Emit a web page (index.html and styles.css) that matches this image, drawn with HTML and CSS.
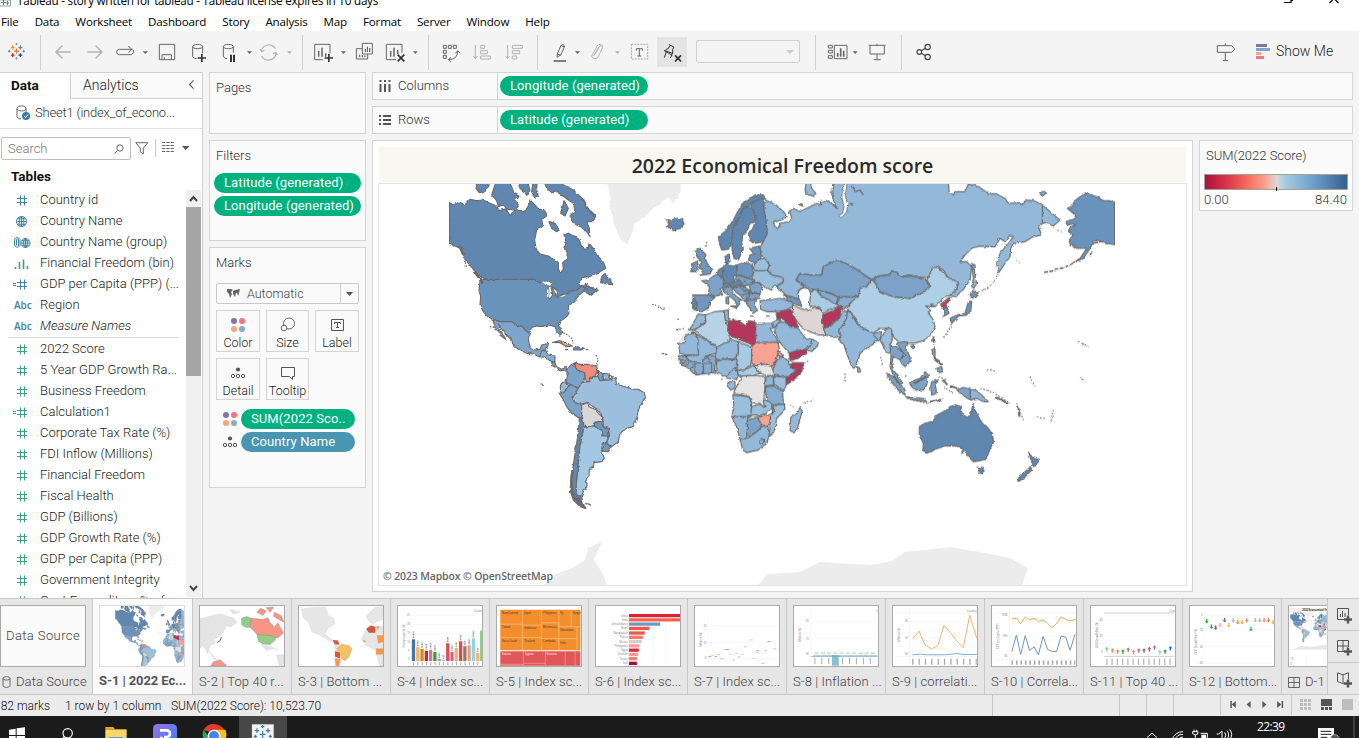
FILE: index.html
```html
<!DOCTYPE html>
<html lang="en">
<head>
<meta charset="utf-8">
<title>Tableau - story written for tableau</title>
<link rel="stylesheet" href="styles.css">
</head>
<body>
<svg class="defs" width="0" height="0">
  <defs>
    <symbol id="hash" viewBox="0 0 40 21"><path d="M17 8.5h10M17 12.5h10M20.5 5.5v10M24.5 5.5v10"/></symbol>
    <symbol id="calc" viewBox="0 0 40 21"><path d="M13 9.5h3M13 11.5h3M17 8.5h10M17 12.5h10M20.5 5.5v10M24.5 5.5v10"/></symbol>
    <symbol id="globe" viewBox="0 0 40 21"><circle cx="21.500" cy="10.500" r="5"/><ellipse cx="21.500" cy="10.500" rx="2.300" ry="5"/><path d="M16.500 10.500h10M21.500 5.500v10M17.500 7.800h8M17.500 13.200h8"/></symbol>
    <symbol id="group" viewBox="0 0 40 21"><circle cx="25.500" cy="11" r="4.500"/><ellipse cx="25.500" cy="11" rx="2" ry="4.500"/><path d="M21 11h9M25.500 6.500v9M22 8.700h7M22 13.300h7"/><path d="M14.500 13.500V7.500a3 3 0 0 1 5.500 0v7M14.500 13a2.800 2.800 0 0 0 5 1M16.500 13.500V8a1 1 0 0 1 2 0V14"/></symbol>
    <symbol id="bin" viewBox="0 0 40 21"><path d="M15.500 14v2M19.500 9v7M23.500 6.500V16M27.500 13v3" stroke-width="1.600"/></symbol>
    <symbol id="tablogo" viewBox="24 130 52 52"><g stroke-width="4" fill="none"><path d="M42 155h16M50 147v16" stroke="#e8762d"/><path d="M33 144h11M38.500 138v12" stroke="#eb912b"/><path d="M56 144h12M62 138v12" stroke="#5b879b"/><path d="M33 167h11M38.500 161v12" stroke="#c72035"/><path d="M56 167h12M62 161v12" stroke="#1f447e"/></g><g stroke-width="2.500" fill="none"><path d="M46 133h8M50 129v8M46 177h8M50 173v8" stroke="#7199a6"/><path d="M24 155h8M28 151v8M68 155h8M72 151v8" stroke="#5c6692"/></g></symbol>
    <g id="dots4"><circle cx="5" cy="5" r="3" fill="#8074a8"/><circle cx="13" cy="5" r="3" fill="#fb7180"/><circle cx="5" cy="13" r="3" fill="#f4a582"/><circle cx="13" cy="13" r="3" fill="#86aad0"/></g>
    <g id="detaildots"><circle cx="9" cy="5.500" r="2.100" fill="#555"/><g fill="none" stroke="#555"><circle cx="4" cy="12" r="1.700"/><circle cx="9" cy="12" r="1.700"/><circle cx="14" cy="12" r="1.700"/></g></g>
    <filter id="coast" filterUnits="userSpaceOnUse" x="440" y="170" width="760" height="430"><feTurbulence type="fractalNoise" baseFrequency="0.22" numOctaves="2" seed="4"/><feDisplacementMap in="SourceGraphic" scale="3" xChannelSelector="R" yChannelSelector="G"/></filter>
    <g id="world">
      <g transform="translate(440 180) scale(.33333)" stroke="#6b6b6b" stroke-width="3.400" stroke-linejoin="round">
        <path fill="#ececec" stroke="none" d="M498 0L512 45 508 70 515 105 525 140 540 175 562 195 575 160 585 130 610 115 640 85 665 70 685 50 700 70 722 35V0Z"/>
        <g fill="#6187b0">
          <path d="M27 67L40 75 58 66 75 75 90 58 110 62 130 60 150 70 170 78 178 92 200 86 210 108 225 84 235 92 250 92 262 85 270 60 285 75 296 88 310 88 318 98 320 108 305 118 308 135 290 150 284 180 288 205 300 222 325 228 340 238 355 245 355 268 362 278 370 268 368 248 380 238 382 218 372 205 378 185 372 165 385 160 395 165 410 170 420 185 425 200 435 208 445 205 447 190 460 205 470 225 485 240 492 250 497 265 480 275 465 285 445 290 430 292 418 305 418 315 430 318 440 312 445 318 435 325 425 318 412 330 395 332 380 338 365 345 350 355 345 345 352 330 335 322 325 318 310 312 285 300 130 298 122 290 112 282 100 268 85 250 70 230 60 205 45 198 35 192 27 190Z"/>
          <path d="M112 0L108 25 118 38 130 35 140 28 148 15 150 0ZM170 0L160 30 155 45 170 62 175 80 190 75 205 88 225 90 235 75 225 60 240 50 222 40 215 20 205 0ZM232 0L240 25 252 35 262 48 270 30 262 0ZM280 0L275 35 285 55 295 50 290 30 292 0Z"/>
          <path d="M310 0L320 25 338 40 345 32 365 45 385 60 400 70 405 90 390 108 400 130 425 142 440 155 450 170 448 145 440 125 460 125 467 108 455 95 440 85 432 60 415 45 400 30 365 12 360 0ZM327 125L345 130 358 150 350 155 335 145ZM372 62L385 85 375 108 362 100 368 80Z"/>
          <path d="M485 290L495 280 500 292 512 298 515 314 500 312 482 308ZM430 330L447 322 472 325 475 330 450 345 440 338Z"/>
        </g>
        <path fill="#6b93bb" d="M120 303L130 298 280 298 310 312 325 318 322 350 330 357 338 345 335 325 352 330 345 345 350 355 365 345 395 332 412 330 425 318 435 325 430 335 415 345 408 358 395 370 385 380 387 400 380 410 360 425 355 435 365 455 362 467 352 460 345 440 325 435 305 440 290 438 275 442 268 460 255 450 245 438 230 440 215 425 180 425 160 418 145 412 130 395 120 375 122 350 117 330Z"/>
        <path fill="#fff" d="M303 309L320 303 340 312 330 318 312 315ZM320 332L327 326 327 352 320 354ZM338 324L350 332 355 345 346 340ZM350 354L368 345 385 342 372 350Z" stroke-width="2"/>
        <path fill="#7fa6ca" d="M160 420L180 425 215 425 230 440 245 438 255 450 268 460 265 480 270 500 280 510 300 508 305 495 325 490 322 505 312 510 305 525 298 530 280 522 260 520 235 508 220 495 215 480 200 465 190 450 175 432 182 455 200 480 180 465 175 450 162 440Z"/>
        <path fill="#86acd0" d="M298 530L305 512 318 512 322 524 345 528 345 545 332 545 318 532ZM332 545L345 548 350 560 365 568 378 562 380 570 360 572 345 562Z"/>
        <path fill="#ef9a8d" d="M340 487L360 482 380 490 397 498 380 500 360 488Z"/>
        <path fill="#6a90b8" d="M400 505L412 500 430 505 425 510 405 510ZM374 509h10M437 509h8"/>
        <path fill="none" stroke-dasharray="5 4" d="M370 458L385 466 395 475 400 490M468 525L475 540 468 555M636 373L655 378 670 390M668 520L682 524M712 418L720 416M710 448L720 448M302 610L310 617 302 616M150 440L162 443M60 205L75 240 80 265"/>
        <path fill="#7ba2c8" d="M380 570L392 555 410 546 405 560 415 572 434 576 436 592 430 605 425 612 420 628 415 625 388 612 378 605 382 590Z"/>
        <path fill="#f28b7c" d="M408 555L412 550 420 553 440 553 455 555 470 558 473 572 465 588 450 592 448 605 440 606 436 595 434 578 412 570 406 562Z"/>
        <path fill="#7ba2c8" d="M473 570L490 582 485 595 495 602 480 602 472 590ZM388 612L415 625 405 640 398 655 405 668 422 672 425 690 425 708 418 714 395 700 380 680 368 655 358 640 370 638 380 628Z"/>
        <path fill="#93bcdc" d="M487 580L508 582 505 597 492 598ZM366 607L388 612 380 628 370 638 360 632 362 615Z"/>
        <path fill="#ddd" d="M508 583L520 590 512 600 507 596Z"/>
        <path fill="#9bbfdc" d="M415 625L425 608 436 606 450 605 448 594 465 590 474 590 480 602 505 600 515 602 525 592 530 610 545 617 575 627 595 628 612 638 617 652 605 670 595 690 590 715 580 740 560 745 540 760 535 785 515 800 505 795 500 786 508 768 505 745 490 740 488 712 475 690 460 680 442 668 425 672 405 668 398 655 405 640Z"/>
        <path fill="#d8d6d6" d="M425 675L442 668 447 680 470 690 475 700 488 712 488 722 465 728 460 738 432 740 425 708Z"/>
        <path fill="#7096bd" d="M465 726L482 724 490 740 505 748 507 768 485 768 488 752 462 738ZM487 790L500 788 513 803 505 815 487 814Z"/>
        <path fill="#a3c8e3" d="M432 742L460 738 488 752 485 768 507 768 500 785 487 790 485 815 493 835 485 845 462 848 460 862 448 865 447 890 436 905 442 915 432 930 425 948 410 946 408 920 412 880 416 840 420 800 426 770Z"/>
        <path fill="#6187b0" d="M418 714L428 712 432 740 425 770 418 800 415 840 412 880 408 920 410 945 425 950 430 975 438 985 420 980 400 960 390 930 395 890 402 840 410 790 415 750Z"/>
        <path fill="none" stroke-width="8" d="M398 870L394 900 396 930 402 952 420 972 436 984M412 952L425 970M60 200L72 225M105 275L125 305"/>
        <path fill="none" stroke-width="4" d="M436 970L456 976M425 55L460 110M440 318L470 330M128 302V312"/>
      </g>
      <g transform="translate(660 180) scale(.33333)" stroke="#6b6b6b" stroke-width="3.400" stroke-linejoin="round">
        <g fill="#6187b0">
          <path d="M15 118L30 125 50 115 68 118 72 132 60 145 40 152 22 140 28 130Z"/>
          <path d="M98 250L112 243 115 260 110 275 92 275ZM120 205L138 225 133 235 145 255 155 270 150 282 122 286 130 275 118 265 125 245 112 232 108 212Z" fill="#7096bd"/>
          <path d="M175 170L200 150 220 120 235 90 255 65 285 45 310 45 318 58 290 60 270 75 250 85 240 110 232 120 218 145 216 190 205 208 185 210 178 190Z"/>
          <path d="M216 190L218 145 240 110 250 85 265 80 282 90 285 115 288 125 270 130 262 150 248 165 245 190 250 205 235 240 222 235 216 210Z"/>
          <path d="M270 75L290 60 308 58 312 90 318 120 322 160 310 185 285 190 268 180 265 160 288 130 285 110 278 85ZM195 230L208 222 210 245 198 250Z"/>
          <path fill="#6b93bb" d="M268 205L300 198 303 215 303 235 285 250 265 240 270 225 282 222Z"/>
        </g>
        <path fill="#93b8d8" d="M312 70L320 62 345 72 375 100 378 112 350 125 345 122 340 130 350 145 360 140 358 130 385 125 395 112 388 95 400 85 420 95 440 85 470 70 485 75 480 65 500 62 515 70 530 85 520 60 515 40 520 0L865 0 867 35 880 45 885 35 915 35 925 12 955 20 985 40 1010 42 1035 55 1045 70 1080 68 1085 75 1095 60 1120 62 1145 72 1170 95 1200 120 1180 138 1155 128 1148 130 1135 140 1145 165 1120 170 1095 185 1060 190 1052 205 1050 230 1035 250 1015 280 1010 250 1020 220 1045 190 1060 170 1050 165 1035 185 1020 175 1005 200 985 200 960 198 935 205 915 225 900 245 920 245 935 260 930 300 905 335 885 350 870 348 880 330 892 320 895 308 868 300 850 270 830 260 818 275 815 290 795 292 770 292 750 285 725 288 710 278 695 272 690 285 655 288 635 298 620 290 575 258 545 245 530 240 515 250 490 260 485 285 450 285 420 280 408 300 425 315 432 320 418 330 412 345 418 358 400 352 378 345 350 320 370 305 368 292 335 285 322 272 328 255 315 235 303 225 300 200 310 185 322 160 318 120 312 90Z"/>
        <path fill="#fff" d="M535 108L548 100 552 80 545 50 552 0 562 0 556 50 563 70 560 95 546 112Z" stroke-width="2.500"/>
        <path fill="none" d="M568 70L580 72M575 12L585 35 600 30 610 45M1147 75V130"/>
        <path fill="#93b8d8" d="M440 0L435 30 445 45 458 48 468 40 455 25 450 0ZM415 75L425 70 428 78ZM1140 42L1152 34 1160 40 1148 46ZM935 250L942 255 945 290 950 310 942 325 935 320 940 295Z"/>
        <path fill="#9bc0dd" d="M285 250L298 238 315 235 328 255 322 272 285 272 280 262ZM275 290L285 272 322 272 335 285 368 292 370 305 350 318 340 320 335 330 320 325 310 318 298 308 280 306Z"/>
        <path fill="#7096bd" d="M230 255L250 248 278 252 280 285 265 295 232 282ZM98 345L150 345 165 352 150 365 145 385 125 395 108 390 112 365 100 360Z"/>
        <path fill="#6187b0" d="M188 265L200 250 215 258 230 258 232 285 220 290 225 305 195 310 188 290ZM175 270L188 262 188 290 172 280ZM190 312L225 305 240 300 248 308 240 318 210 320 195 322ZM98 360L110 362 108 390 98 388Z"/>
        <path fill="#7ba2c8" d="M125 302L145 300 160 288 172 282 190 295 190 320 180 328 188 345 165 348 145 345 148 320ZM188 325L210 318 218 325 215 335 230 350 245 360 235 362 240 372 232 378 225 362 205 345 190 335ZM232 285L265 295 285 300 270 315 248 318 240 300 225 298ZM268 315L285 306 300 310 308 328 300 340 272 335ZM265 338L300 342 300 355 270 358ZM218 322L248 318 268 330 268 355 255 365 240 345 225 335ZM258 365L275 358 290 360 285 375 292 392 278 400 270 385ZM198 352L206 350 206 372 198 370ZM215 378L232 378 230 386Z"/>
        <path fill="none" d="M240 320L255 335 268 330M255 318L258 330M245 345L265 340M262 352L258 365M250 300L262 312M205 308L215 318M270 408H285M318 408H328"/>
        <path fill="#93b8d9" d="M300 362L340 358 360 355 385 362 400 368 398 380 375 392 345 395 320 395 302 388Z"/>
        <path fill="#7096bd" d="M370 345L395 352 420 362 425 380 405 372 385 360Z"/>
        <path fill="#7ba2c8" d="M408 300L420 280 450 285 485 285 490 260 530 240 575 258 620 290 632 298 620 320 600 325 595 350 560 350 530 350 515 342 490 335 460 328 455 345 445 325 435 318Z"/>
        <path fill="#a9cce3" d="M452 338L462 328 490 335 515 342 535 352 525 370 545 378 520 385 490 397 478 384 455 382 448 375Z"/>
        <path fill="#86acd0" d="M470 330L490 335 515 342 535 352 528 372 505 360 480 345ZM540 352L595 350 575 365 560 378 550 390 540 378 530 372Z"/>
        <path fill="#b5355b" d="M488 402L510 395 530 385 545 380 540 410 520 425 508 440 490 442 484 425ZM348 400L365 392 398 388 405 415 414 440 395 442 372 422 360 415 352 420Z"/>
        <path fill="#ded6d5" d="M397 375L420 385 445 392 462 382 480 388 490 400 484 425 498 465 475 465 450 455 435 450 420 435 405 415 398 395Z"/>
        <path fill="#93b8d9" d="M490 445L510 440 540 410 550 392 562 395 560 415 545 440 535 455 545 470 525 472 498 465ZM345 440L360 425 378 428 395 442 415 445 425 460 440 478 455 475 475 490 470 500 455 515 440 510 405 515 388 520 370 500 355 480 345 455ZM338 425L350 418 362 420 348 440 340 442ZM562 392L575 400 590 430 600 440 635 455 645 460 665 455 660 480 645 485 640 492 620 505 600 520 592 550 582 565 575 560 560 520 550 490 535 478 545 470 535 455 545 440 560 415ZM592 560L600 565 602 575 593 578Z"/>
        <path fill="none" d="M455 475L452 495 440 508M600 435L620 452 645 455M640 465L655 480"/>
        <path fill="#b5355b" d="M388 518L410 512 438 507 440 520 415 535 390 542Z"/>
        <path fill="#aecfe5" d="M635 298L650 315 660 335 700 350 750 355 790 335 812 318 800 300 818 262 835 262 860 290 895 308 890 328 870 345 850 355 825 380 810 370 820 380 800 378 812 392 805 398 820 420 825 440 812 465 790 482 765 488 750 490 735 485 720 490 700 470 690 445 660 445 640 460 610 445 590 425 575 400 560 385 575 365 595 350 600 325 620 320Z"/>
        <path fill="#7ba2c8" d="M640 298L655 288 690 285 695 272 710 278 725 290 750 288 795 295 800 305 812 318 790 335 750 355 700 350 660 335Z"/>
        <path fill="#c43a5e" d="M842 372L868 352 870 362 858 372 860 382 845 384Z"/>
        <path fill="#6b93bb" d="M850 385L862 382 867 400 852 408ZM930 345L940 330 957 340 940 355ZM870 415L890 405 915 400 922 375 928 360 935 365 932 395 920 405 895 408 875 430Z"/>
        <path fill="#9bc0dd" d="M660 480L680 445 695 450 697 480 690 495 695 515 685 520 675 515 668 495Z"/>
        <path fill="#7ba2c8" d="M690 500L710 500 730 520 722 540 700 530 695 550 700 570 715 590 728 610 720 612 700 585 690 560 693 530ZM710 490L735 485 745 490 735 505 750 530 750 545 735 560 725 550 720 540 735 525ZM678 580L700 590 720 615 735 630 735 645 720 635 700 610ZM735 650L760 652 790 655 800 665 760 660ZM752 605L780 595 795 575 805 585 800 615 790 630 765 630 755 620ZM815 605L835 600 825 610 830 640 815 645 812 620ZM890 630L910 622 931 628 931 660 915 650 905 642ZM815 510L825 505 825 530 830 545 820 535ZM830 565L845 560 848 575 838 578ZM814 482L822 470 820 484ZM752 496L762 494 758 506Z"/>
        <path fill="#8fb6d8" d="M931 628L950 632 965 645 985 665 970 665 950 655 931 660Z"/>
        <path fill="none" stroke-width="6" d="M828 540L845 555M760 612L800 590M870 618L895 625M810 665L845 660M1008 652L1045 670M1075 680L1078 710M822 535L840 545M850 600L862 615"/>
        <path fill="none" stroke-dasharray="5 5" d="M955 338C985 325 1000 310 1015 285M662 530L668 560M680 590L720 640M740 655L800 670 850 655M850 620L880 640M960 625L995 635 1050 670M1070 670L1090 720M1130 712L1155 715M1180 690L1172 730M1110 590L1125 620M1255 485L1288 500M825 480L822 510M875 435L850 475M980 570L1010 574M1260 590L1275 605M735 590L750 600M835 590L860 600M1192 150L1208 156M1068 240L1080 248M100 235L112 225M135 200L142 185M48 450L75 445M5 520L22 525M185 600L190 580M390 675L400 682M430 668L460 660M440 545L450 542M555 580L556 610M10 385L14 388"/>
        <g fill="#6187b0" transform="translate(600 0)">
          <path d="M178 740L190 732 220 722 230 705 245 698 258 692 270 680 285 675 305 680 300 695 315 705 330 710 335 690 338 673 345 690 355 710 362 722 385 745 398 765 400 785 385 820 378 838 355 843 340 845 325 830 318 815 305 820 310 808 300 800 280 798 255 798 225 808 200 820 188 815 190 790 178 765ZM352 862L370 862 368 878 358 880ZM505 817L520 835 538 838 530 855 520 860 515 845ZM512 860L515 870 490 895 475 905 472 898 490 880Z"/>
          <path fill="#6b93bb" d="M770 67L770 195 742 190 728 185 712 180 700 185 690 205 670 235 640 248 660 235 680 205 650 205 630 190 628 180 640 165 625 155 632 142 650 130 620 135 615 125 640 118 650 110 640 100 622 85 640 75 640 65 660 50 680 40 710 50 730 62 745 62Z"/>
          <path fill="none" stroke-width="5" stroke-dasharray="12 4" d="M552 277C590 272 620 262 645 245M700 190L728 183M690 225L698 212"/>
        </g>
        <g fill="#93b8d9">
          <path fill="#b8d3e6" d="M102 450L135 430 135 405 165 395 192 392 198 430 205 440 205 465 213 480 170 502Z"/>
          <path d="M88 450L105 420 115 402 135 405 138 425 102 450ZM192 392L205 390 205 415 210 420 198 430Z"/>
          <path fill="#e6e6e6" stroke="none" d="M55 490L75 455 98 455 95 465 75 470 72 488Z"/>
          <path fill="#b5355b" d="M205 425L220 420 240 425 258 438 262 422 285 425 287 499 215 470 203 460Z"/>
          <path d="M287 430L335 430 340 445 330 445 355 487 288 487ZM55 490L72 488 75 470 98 455 113 470 115 525 75 525 60 520ZM98 455L170 502 168 520 140 528 125 548 105 550 85 540 75 528 115 525 113 470ZM170 502L213 478 233 484 235 520 225 537 190 537 170 540 165 528Z"/>
          <path fill="#a5cae2" d="M235 484L275 502 275 535 272 555 250 572 232 565 228 540 235 520Z"/>
          <path fill="#f7a292" d="M275 500L288 487 355 487 358 510 350 535 345 550 335 560 315 550 290 556 275 550ZM352 520L358 512 370 530 358 530ZM292 715L318 702 332 708 330 730 320 740 305 735ZM311 628L317 626 316 634Z"/>
          <path d="M345 550L360 530 385 540 388 560 410 570 385 590 365 590 345 585 338 570Z"/>
          <path fill="#b5355b" d="M388 555L400 548 432 548 425 575 400 600 378 615 376 595 395 582 410 570 390 562Z"/>
          <path fill="#86acd0" d="M55 528L75 528 85 540 105 550 125 548 140 528 165 528 170 540 165 555 162 578 130 582 105 585 90 570 72 555 58 545Z"/>
          <path fill="none" d="M58 540H72M75 555L90 548M90 570L100 552M105 585V552M130 582V550H155V578M140 528L155 550M62 550L80 545"/>
          <path d="M170 545L190 537 232 540 228 560 210 575 200 590 185 585 167 578ZM228 560L235 590 228 598 200 595 210 575Z"/>
          <path fill="#a9cce3" d="M232 570L255 570 280 555 300 580 285 585 260 588 235 590Z"/>
          <path fill="#e4e4e4" d="M222 635L240 600 245 588 285 586 315 590 315 620 312 650 312 685 300 670 275 668 268 650 245 645 222 642ZM285 558L315 552 335 560 340 575 345 585 320 587 300 580Z"/>
          <path d="M205 605L225 605 225 625 212 630 202 618ZM318 592L340 588 340 615 315 618Z"/>
          <path fill="#9bc0dd" d="M340 588L378 592 378 618 370 632 342 612ZM218 645L245 647 268 652 275 670 272 710 215 710 222 680ZM275 680L300 672 315 685 310 662 335 662 335 685 318 698 298 708 272 708ZM340 675L374 672 374 690 350 715 345 745 335 765 328 765 330 740 332 705 338 695Z"/>
          <path fill="#86acd0" d="M315 620L342 618 368 635 370 672 340 675 320 660Z"/>
          <path d="M215 710L275 710 262 715 262 775 240 778 230 740ZM240 778L262 775 290 755 308 738 325 742 328 765 320 790 295 810 260 818 248 810ZM392 712L410 700 420 682 427 690 422 710 412 745 402 758 390 752Z"/>
          <path fill="#7ba2c8" d="M262 720L292 712 305 735 290 755 270 768 262 765ZM336 678L343 690 338 702Z"/>
          <circle cx="305" cy="783" r="6"/>
        </g>
      </g>
    </g>
  </defs>
</svg>

<header class="titlebar">
  <svg class="app-icon" viewBox="0 0 12 12"><path d="M0 0h10.500v6H0" fill="#fff" stroke="#999"/><path d="M1 2.500h5M3.500 0v5M6 3h3M7.500 1v4" stroke="#4e87a8"/></svg>
  <span class="title-text">Tableau - story written for tableau - Tableau license expires in 10 days</span>
  <svg class="win-buttons" width="75" height="12" viewBox="1284 0 75 12"><path d="M1283.500 -3v5.500h7.500v-5.500M1291 .5h2" stroke="#000" fill="none" stroke-width="1.200"/><path d="M1329.500 3l10-10M1338.500 3l-10-10" stroke="#000" fill="none" stroke-width="1.200"/></svg>
</header>

<nav class="menubar"><span>File</span><span>Data</span><span>Worksheet</span><span>Dashboard</span><span>Story</span><span>Analysis</span><span>Map</span><span>Format</span><span>Server</span><span>Window</span><span>Help</span></nav>

<div class="toolbar">
  <svg width="40" height="41" viewBox="0 93 120 123"><use href="#tablogo" x="24" y="129" width="51" height="51"/></svg><i class="sep"></i>
  <svg class="dim" width="39" height="41" viewBox="123 93 117 123"><path d="M168 156H212M187 137L168 156 187 175" stroke-width="4.500"/></svg>
  <svg class="dim" width="32" height="41" viewBox="240 93 96 123"><path d="M262 156H306M287 137L306 156 287 175" stroke-width="4.500"/></svg>
  <svg width="38" height="41" viewBox="336 93 114 123"><path d="M398 148H358a8 8 0 0 0 0 16h36q10 -6 6 -14M385 138l10 10-10 10"/><path class="f" d="M428 154h16l-8 8z"/></svg>
  <svg width="35" height="41" viewBox="450 93 105 123"><path d="M478 133H524V179H478ZM486 179V164H514V179M493 179v-7"/></svg>
  <svg width="30" height="41" viewBox="555 93 90 123"><path d="M578 140c0-9 30-9 30 0c0 8-30 8-30 0V170q4 6 12 6M608 140V160"/><path class="k" d="M593 174h25M605.500 162v24" stroke-width="5"/></svg>
  <svg width="41" height="41" viewBox="645 93 123 123"><path d="M670 140c0-9 30-9 30 0c0 8-30 8-30 0V170q4 6 12 6M700 140V158"/><path class="k" d="M693 164v22M702 164v22" stroke-width="6"/><path class="f" d="M741 154h15l-7.500 8z"/></svg>
  <svg class="dim" width="46" height="41" viewBox="768 93 138 123"><path d="M784 152a23 23 0 0 1 42-6M828 160a23 23 0 0 1-43 8M780 147l5 8 8-4M832 165l-4-8-9 4" stroke-width="3.500"/><path class="f" d="M861 154h15l-7.500 8z"/></svg><i class="sep"></i>
  <svg width="45" height="41" viewBox="909 93 135 123"><path d="M968 179H944V133H990V160"/><path d="M956 170V153M966 170V143M977 170V160" stroke-width="4.500"/><path class="k" d="M974 174h25M986.500 162v24" stroke-width="5"/><path class="f" d="M1023 154h15l-7.500 8z"/></svg>
  <svg width="33" height="41" viewBox="1044 93 99 123"><path d="M1087 130H1117V162H1087ZM1087 146H1069V177H1103V162"/><path d="M1096 156v-9M1102 156v-16M1109 156v-12M1079 172v-8M1087 172v-7M1095 172v-6" stroke-width="3.500"/></svg>
  <svg width="42" height="41" viewBox="1143 93 126 123"><path d="M1188 179H1159V133H1206V158"/><path d="M1172 170V153M1182 170V143M1193 162V150" stroke-width="4.500"/><path class="k" d="M1193 164l20 20M1213 164l-20 20" stroke-width="5"/><path class="f" d="M1239 154h14l-7 8z"/></svg>
  <i class="sep spaced"></i>
  <svg width="33" height="41" viewBox="-33 93 99 123"><path d="M7 136h9v9H7zM22 136h9v9H22zM37 136h9v9h-9zM7 151h9v9H7zM7 166h9v9H7zM22 179q28 0 28-26M30 172l-8 7 8 7M43 160l7-8 7 8"/></svg>
  <svg class="dim" width="33" height="41" viewBox="72 93 99 123"><path d="M109 135V175M103 168l6 8 6-8M125 136h12v9h-12zM125 152h20v9h-20zM125 168h29v9h-29z"/></svg>
  <svg class="dim" width="40" height="41" viewBox="171 93 120 123"><path d="M206 135V175M200 168l6 8 6-8M220 136h30v9h-30zM220 152h22v9h-22zM220 168h13v9h-13z"/></svg><i class="sep wide"></i>
  <svg width="45" height="41" viewBox="300 93 135 123"><path d="M355 162L366 136Q371 130 377 138L366 164 354 172ZM355 162L366 166M367 137L377 141"/><path d="M344 183H381" stroke-width="5"/><path class="f" d="M408 154h15l-7.500 8z"/></svg>
  <svg class="dim" width="40" height="41" viewBox="435 93 120 123"><path d="M468 163l13-23q7-8 10 2L477 172q-11 9-19-3L474 138q10-10 18 1M464 168l15-27"/><path class="f" d="M528 154h15l-7.500 8z"/></svg>
  <svg width="33" height="41" viewBox="555 93 99 123"><path d="M577 133H626V177H577Z" stroke="#aaa" stroke-dasharray="6 3"/><path d="M592 152v-6h18v6M601 146v22M595 168h12"/></svg>
  <svg width="30" height="41" viewBox="654 93 90 123"><path d="M654 111h90v90h-90z" fill="#e4e4e4" stroke="none"/><path d="M690 134L705 141 701 148V160L678 152Q682 146 688 146L692 137M682 155L676 173M701 158L694 174M675 151L700 166" stroke="#333"/><path class="k" d="M708 166l18 18M726 166l-18 18" stroke="#000" stroke-width="5"/></svg>
  <span class="fit"><svg width="8" height="5" viewBox="0 0 8 5"><path d="M0 0h8L4 4z"/></svg></span>
  <i class="sep fitsep"></i>
  <svg width="45" height="41" viewBox="1132 93 135 123"><path d="M1169 136h12v8h-12zM1169 151h12v8h-12zM1169 167h12v8h-12zM1187 136h38v40h-38z"/><path d="M1197 170v-11M1206 170v-25M1215 170v-18" stroke-width="5"/><path class="f" d="M1242 154h15l-7.500 8z"/></svg>
  <svg width="40" height="41" viewBox="1267 93 120 123"><path d="M1290 136h51M1294 137v25h43v-25M1315 131v5M1315 162v16M1305 179h21"/></svg><i class="sep"></i>
  <svg width="46" height="41" viewBox="1390 93 138 123"><g stroke="#444" stroke-width="3.500"><circle cx="1442" cy="156" r="7"/><circle cx="1467" cy="141" r="8"/><circle cx="1467" cy="171" r="8"/><path d="M1448 152l12-7M1448 160l12 7"/></g></svg>
  <i class="grow"></i>
  <svg width="40" height="41" viewBox="840 93 120 123"><path d="M868 137H911L920 147 911 157H868ZM892 130v7M892 157V182M885 182h15"/></svg>
  <svg class="showicon" width="14" height="15" viewBox="0 0 14 15"><path fill="#8074a0" d="M0 0h11v3H0z"/><path fill="#7ea6cf" d="M0 4h14v3H0z"/><path fill="#f4a582" d="M0 8h5v3H0z"/><path fill="#fb7180" d="M0 12h8v3H0z"/></svg>
  <span class="showme">Show Me</span>
</div>

<main class="work">
  <aside class="datapane">
    <div class="ptabs"><b>Data</b><span>Analytics</span><svg width="7" height="11" viewBox="0 0 7 11"><path d="M6 .5L1 5.500 6 10.500" fill="none" stroke="#555" stroke-width="1.300"/></svg></div>
    <div class="source"><svg width="15" height="16" viewBox="0 0 15 16"><path d="M1 3.500c0-3.500 9-3.500 9 0s-9 3-9 0V12q1 2 4 2M10 3.500V8" fill="none" stroke="#666"/><circle cx="10" cy="11" r="4" fill="#3c7da5"/><path d="M8 11l1.500 1.500L12 9.500" stroke="#fff" fill="none"/></svg><span>Sheet1 (index_of_econo...</span></div>
    <div class="search"><div class="sbox"><span>Search</span><svg width="10" height="10" viewBox="0 0 10 10"><circle cx="6" cy="4" r="3.200"/><path d="M3.700 6.300L.5 9.500"/></svg></div>
      <svg class="funnel" width="14" height="13" viewBox="0 0 14 13"><path d="M.8.700H12.800L8.300 6.200V12L5.300 9.800V6.200Z"/></svg><i></i>
      <svg class="listic" width="12" height="10" viewBox="0 0 12 10"><path d="M0 .5h12M0 3.500h12M0 6.500h12M0 9.500h12" stroke-dasharray="3.300 1"/></svg>
      <svg class="car" width="8" height="4" viewBox="0 0 8 4"><path d="M0 0h7.500L3.700 4z" fill="#555" stroke="none"/></svg></div>
    <h3>Tables</h3>
    <div class="listwrap">
      <div class="fields">
        <div class="row dimn"><svg><use href="#hash"/></svg>Country id</div>
        <div class="row dimn"><svg><use href="#globe"/></svg>Country Name</div>
        <div class="row dimn"><svg><use href="#group"/></svg>Country Name (group)</div>
        <div class="row"><svg><use href="#bin"/></svg>Financial Freedom (bin)</div>
        <div class="row dimn"><svg><use href="#calc"/></svg>GDP per Capita (PPP) (...</div>
        <div class="row dimn"><em class="abc">Abc</em>Region</div>
        <div class="row dimn ital"><em class="abc">Abc</em>Measure Names</div>
        <hr>
        <div class="row"><svg><use href="#hash"/></svg>2022 Score</div>
        <div class="row"><svg><use href="#hash"/></svg>5 Year GDP Growth Ra...</div>
        <div class="row"><svg><use href="#hash"/></svg>Business Freedom</div>
        <div class="row"><svg><use href="#calc"/></svg>Calculation1</div>
        <div class="row"><svg><use href="#hash"/></svg>Corporate Tax Rate (%)</div>
        <div class="row"><svg><use href="#hash"/></svg>FDI Inflow (Millions)</div>
        <div class="row"><svg><use href="#hash"/></svg>Financial Freedom</div>
        <div class="row"><svg><use href="#hash"/></svg>Fiscal Health</div>
        <div class="row"><svg><use href="#hash"/></svg>GDP (Billions)</div>
        <div class="row"><svg><use href="#hash"/></svg>GDP Growth Rate (%)</div>
        <div class="row"><svg><use href="#hash"/></svg>GDP per Capita (PPP)</div>
        <div class="row"><svg><use href="#hash"/></svg>Government Integrity</div>
        <div class="row"><svg><use href="#hash"/></svg>Govt Expenditure % of ...</div>
      </div>
      <div class="scroll"><svg width="15" height="17" viewBox="0 0 15 17"><path d="M4 11l3.500-4L11 11" /></svg><i></i><svg width="15" height="17" viewBox="0 0 15 17"><path d="M4 6l3.500 4L11 6"/></svg></div>
    </div>
  </aside>

  <section class="cards">
    <div class="card pages"><h4>Pages</h4></div>
    <div class="card filters"><h4>Filters</h4><span class="pill">Latitude (generated)</span><span class="pill">Longitude (generated)</span></div>
    <div class="card marks"><h4>Marks</h4>
      <div class="select"><svg width="13" height="9" viewBox="0 0 13 9"><path d="M0 0h4l2 1-2 2 1 2-2 4-1-4-2-2zM6 2l2-1 5-1-1 4-1 3-1-3H9l-1 4-2-3z" fill="#666"/></svg><span>Automatic</span><i><svg width="8" height="5" viewBox="0 0 8 5"><path d="M0 0h7L3.500 4z" fill="#555"/></svg></i></div>
      <div class="mgrid">
        <div><svg width="18" height="18"><use href="#dots4"/></svg>Color</div>
        <div><svg width="18" height="18" viewBox="0 0 18 18" fill="#fafafa" stroke="#666"><circle cx="10" cy="7.500" r="5.500"/><circle cx="5" cy="12" r="2.800"/></svg>Size</div>
        <div><svg width="18" height="18" viewBox="0 0 18 18" fill="none" stroke="#555"><path d="M3.500 3.500h12v11h-12zM6.500 8V6.500h6V8M9.500 6.500v5M8 11.500h3"/></svg>Label</div>
        <div><svg width="18" height="18"><use href="#detaildots"/></svg>Detail</div>
        <div><svg width="18" height="18" viewBox="0 0 18 18" fill="none" stroke="#555"><path d="M2.500 3.500h13v9h-2v3l-3-3h-8z"/></svg>Tooltip</div>
      </div>
      <div class="enc"><svg width="18" height="18"><use href="#dots4"/></svg><span class="pill">SUM(2022 Sco..</span></div>
      <div class="enc"><svg width="18" height="18"><use href="#detaildots"/></svg><span class="pill blue">Country Name</span></div>
    </div>
  </section>

  <section class="canvas">
    <div class="shelf"><div class="slabel"><svg width="12" height="12" viewBox="0 0 12 12"><path d="M1.500 4v8M6 4v8M10.500 4v8M1.500 0v2M6 0v2M10.500 0v2" stroke="#555" stroke-width="2"/></svg>Columns</div><span class="pill">Longitude (generated)</span></div>
    <div class="shelf"><div class="slabel"><svg width="12" height="12" viewBox="0 0 12 12"><path d="M4 2h8M4 6h8M4 10h8M0 2h2M0 6h2M0 10h2" stroke="#555" stroke-width="1.800"/></svg>Rows</div><span class="pill">Latitude (generated)</span></div>
    <div class="lower">
      <div class="view">
        <h1>2022 Economical Freedom score</h1>
        <div class="mapbox">
          <svg width="807" height="401" viewBox="379 184 807 401">
            <defs><clipPath id="edge"><path d="M449 184H1115V585H449Z"/></clipPath></defs>
            <path fill="#ececec" d="M543 585L556 574 572 568 585 560 588 548 603 541 598 550 594 560 603 574 607 585ZM758 585L768 574 800 572 820 562 850 564 872 565 892 561 905 552 925 550 950 547 985 553 1010 558 1028 568 1022 585Z"/>
            <g clip-path="url(#edge)"><g filter="url(#coast)"><use href="#world"/></g></g>
            <path d="M449.500 203V244M1114.500 203V245" stroke="#6b6b6b"/>
          </svg>
          <span class="credit">© 2023 Mapbox © OpenStreetMap</span>
        </div>
      </div>
      <div class="legend"><h4>SUM(2022 Score)</h4><div class="ramp"><i></i></div><div class="ends"><span>0.00</span><span>84.40</span></div></div>
    </div>
  </section>
</main>

<footer class="sheets">
  <div class="tab first"><div class="thumb ds">Data Source</div><p><svg width="9" height="12" viewBox="0 0 9 12"><path d="M1 2.500c0-2.500 7-2.500 7 0V9.500c0 2.500-7 2.500-7 0ZM1 2.500c0 2 7 2 7 0" fill="none" stroke="#666"/></svg>Data Source</p></div>
  <div class="tab active"><svg class="thumb" viewBox="299 32 255 180"><use href="#world" transform="translate(60.800 -83.800) scale(.634)"/></svg><p>S-1 | 2022 Ec...</p></div>
  <div class="tab"><svg class="thumb" viewBox="599 32 255 180">
    <path fill="#e4e4e4" stroke="#ccc" d="M599 70L630 62 660 55 700 68 712 80 690 95 680 90 670 110 655 125 640 130 645 145 630 150 622 175 615 160 605 150 599 160ZM690 40L720 50 700 55ZM785 148L810 152 835 165 822 160 800 165ZM832 180L854 178V212H840ZM625 165L640 190 650 195Z"/>
    <path fill="#91cf86" stroke="#777" d="M725 68L740 63 754 68 752 96 735 95 726 88ZM772 117L810 119 832 122 826 135 812 148 790 146 776 138Z"/>
    <path fill="#f99584" stroke="#777" d="M754 68L775 70 790 72 805 66 812 82 825 95 835 82 852 112 835 128 810 120 772 117 760 105 752 95ZM772 50L782 38 800 45 790 60ZM800 36L822 34 812 50ZM825 50L845 60 854 80 838 72 822 62ZM632 212L640 200 660 194 678 210V212Z"/>
    <path stroke="#387a5c" stroke-width="3" fill="none" d="M650 142L660 136 664 125"/></svg><p>S-2 | Top 40 r...</p></div>
  <div class="tab"><svg class="thumb" viewBox="896 32 255 180">
    <path fill="#e6e6e6" stroke="#d0d0d0" d="M904 40L940 35 975 34 985 60 1000 68 1005 85 985 98 975 115 985 125 1000 135 1010 145 985 135 960 120 935 110 925 80 908 65ZM1100 62L1115 45 1130 34 1151 34V70L1120 85 1108 78ZM1086 130L1095 110 1110 90 1151 95V212H1140L1128 165 1098 150ZM1003 150L1030 145 1040 160 1020 212H1005L1008 180Z"/>
    <path fill="#f3c06a" stroke="#c99548" d="M1010 160L1025 148 1045 150 1057 160 1048 185 1035 198 1026 190 1018 178Z"/><path fill="#c95b3e" d="M998 134L1015 136 1018 148 1005 148ZM1100 100L1115 90 1128 95V112L1108 112ZM1005 168L1020 172V190L1005 184ZM980 115L1000 120 985 116Z"/><path fill="#f3994f" d="M1004 190L1022 190 1018 212H1008ZM1132 120H1151V140L1136 145ZM1130 160H1151V178H1130ZM1088 133L1100 138 1095 142ZM1130 95L1140 92 1135 104Z"/></svg><p>S-3 | Bottom ...</p></div>
  <div class="tab"><svg class="thumb" viewBox="23 32 255 180">
    <path stroke="#eee" d="M62 59H270M62 87H270M62 115H270M62 142H270M62 170H270M62 45V198M62 198H270"/>
    <g class="tiny"><text x="254" y="48">Country</text><text x="50" y="61">25</text><text x="50" y="89">20</text><text x="50" y="117">15</text><text x="50" y="144">10</text><text x="53" y="172">5</text><text x="53" y="194">0</text><text transform="translate(43 158) rotate(-90)">Unemployment (%)</text></g>
    <g stroke-width="10"><path stroke="#4575a6" d="M70 198V132"/><path stroke="#fdb366" d="M83 198V155"/><path stroke="#b8942c" d="M96 198V161"/><path stroke="#d6212c" d="M109 198V167"/><path stroke="#dc6f95" d="M122 198V164"/><path stroke="#3f9f3f" d="M135 198V170"/><path stroke="#d080c0" d="M148 198V191"/><path stroke="#9ad0c8" d="M161 198V194"/><path stroke="#dd4c51" d="M174 198V144"/><path stroke="#cf6398" d="M187 198V170"/><path stroke="#fdb06c" d="M200 198V158"/><path stroke="#e0484e" d="M213 198V138"/><path stroke="#a07560" d="M226 198V153"/><path stroke="#d8a58c" d="M239 198V150"/><path stroke="#8dd4e4" d="M252 198V129"/><path stroke="#fdb06c" d="M265 198V173"/><path stroke="#90d080" d="M277 198V105"/></g>
    <path stroke="#999" stroke-width="5" stroke-dasharray="3 1.500" d="M70 128V108M83 152V136M96 158V142M109 163V145M122 160V144M135 166V150M148 188V173M161 191V180M174 140V124M187 167V150M200 155V140M213 135V117M226 150V136M239 147V132M252 126V106M265 170V156"/><path stroke="#aaa" stroke-width="10" stroke-dasharray="3 10" d="M69 206H277"/></svg><p>S-4 | Index sc...</p></div>
  <div class="tab"><svg class="thumb" viewBox="320 32 255 180"><path fill="#f28e2b" d="M330 42H573V165H330Z"/><path fill="#e15759" d="M330 168H573V212H330Z"/><path stroke="#f9c58c" stroke-width="2" fill="none" d="M397 42V165M455 42V165M508 42V165M545 42V94M563 94V165M330 86H397V89H455V82H508V94H573M330 127H455V130H508V130H563"/><path stroke="#f0a0a2" stroke-width="2" fill="none" d="M400 168V212M467 168V212M527 168V212M557 168V212M330 208H400M400 205H467"/><g class="tiny dk"><text x="335" y="56">New Zealand</text><text x="403" y="56">Japan</text><text x="460" y="56">Philippines</text><text x="511" y="56">Fiji</text><text x="550" y="56">Kyrgyz</text><text x="335" y="97">Taiwan</text><text x="403" y="100">Indonesia</text><text x="460" y="97">Micronesia</text><text x="511" y="107">Uzbekistan</text><text x="335" y="140">Korea South</text><text x="403" y="140">Thailand</text><text x="460" y="140">Cambodia</text><text x="511" y="145">India</text></g><g class="tiny lt"><text x="335" y="180">Estonia</text><text x="405" y="180">Cyprus</text><text x="470" y="180">Slovenia</text></g></svg><p>S-5 | Index sc...</p></div>
  <div class="tab"><svg class="thumb" viewBox="617 32 255 180"><path stroke="#eee" d="M751 50V210M791 50V210M831 50V210"/><g stroke-width="10"><path stroke="#dc2036" d="M717 60H872"/><path stroke="#f5644e" d="M717 73H872"/><path stroke="#6b9bc5" d="M717 86H812"/><path stroke="#f2564a" d="M717 99H778"/><path stroke="#f2564a" d="M717 113H765"/><path stroke="#f8786a" d="M717 126H759"/><path stroke="#d0d0d0" d="M717 139H756"/><path stroke="#fc9c90" d="M717 152H748"/><path stroke="#dc2840" d="M717 165H747"/><path stroke="#fc9c90" d="M717 178H745"/><path stroke="#f8786a" d="M717 191H741"/><path stroke="#a80c32" d="M717 205H741"/></g><g class="tiny end"><text x="714" y="63">China</text><text x="714" y="76">India</text><text x="714" y="89">United States</text><text x="714" y="102">Brazil</text><text x="714" y="115">Bangladesh</text><text x="714" y="129">Russia</text><text x="714" y="142">Mexico</text><text x="714" y="155">Philippines</text><text x="714" y="168">Egypt</text><text x="714" y="181">Vietnam</text><text x="714" y="194">Turkey</text><text x="714" y="208">Iran</text></g></svg><p>S-6 | Index sc...</p></div>
  <div class="tab"><svg class="thumb" viewBox="914 32 255 180"><path stroke="#eee" d="M954 91H1169M954 142H1169M954 190H1169M954 50V198"/><g class="tiny"><text x="940" y="94">20</text><text x="940" y="145">10</text><text x="944" y="192">0</text><text transform="translate(935 155) rotate(-90)">Inflation (%)</text></g><g stroke-width="2.500" opacity=".8"><path stroke="#4a80b0" d="M955 184h8M1134 139h9M1101 167h8"/><path stroke="#f39a4a" d="M964 180h7M981 178h8M1152 161h8"/><path stroke="#5cb85c" d="M991 191h8M1003 163h7"/><path stroke="#e05058" d="M1009 163h8M973 184h8"/><path stroke="#c090c8" d="M1027 195h7M1044 186h8M1062 155h9M1018 177h7"/><path stroke="#bbb" d="M1080 134h9M1089 190h8M1036 175h8"/><path stroke="#5ac0d0" d="M1116 205h9M1126 166h6"/><path stroke="#b0c060" d="M1054 178h6M1098 172h7"/></g></svg><p>S-7 | Index sc...</p></div>
  <div class="tab"><svg class="thumb" viewBox="41 32 255 180"><path stroke="#eee" d="M92 78H294M92 130H294M92 40V183"/><path fill="#83c3d4" d="M156 180H177V212H156Z"/><path stroke="#6da3cc" stroke-width="2" fill="none" d="M100 182H240L252 180 265 182H294M92 184H294"/><path stroke="#ccc" stroke-width="4" stroke-dasharray="13 6" d="M103 174H290"/><path stroke="#aaa" stroke-width="20" stroke-dasharray="3 18" d="M103 198H290"/><g class="tiny"><text x="77" y="81">2K</text><text x="77" y="133">1K</text><text x="77" y="181">0K</text><text x="290" y="48">C</text><text transform="translate(61 141) rotate(-90)">Inflation (%)</text></g></svg><p>S-8 | Inflation ...</p></div>
  <div class="tab"><svg class="thumb" viewBox="338 32 255 180"><path stroke="#ddd" d="M345 53H592M345 184H592M388 40V210"/><path stroke="#eee" d="M388 78H592M388 128H592"/><path stroke="#f7b06c" stroke-width="3" fill="none" d="M397 132L417 107 436 150 455 161 474 151 493 90 513 112 532 137 551 158 571 59 592 128"/><path stroke="#6b9bc8" stroke-width="2.500" fill="none" d="M397 179L420 177 440 179H500L532 175 550 178H592"/><path stroke="#aaa" stroke-width="18" stroke-dasharray="4 15.300" d="M396 200H592"/><g class="tiny"><text x="562" y="48">Country</text><text x="374" y="81">2K</text><text x="374" y="131">1K</text><text x="374" y="181">0K</text><text transform="translate(358 141) rotate(-90)">Inflation (%)</text></g></svg><p>S-9 | correlati...</p></div>
  <div class="tab"><svg class="thumb" viewBox="635 32 255 180"><path stroke="#ddd" d="M643 52H888M643 193H888M688 40V210"/><path stroke="#eee" d="M688 122H888"/><path stroke="#f7a85c" stroke-width="3" fill="none" d="M695 71L709 67 722 85 736 64 749 73 763 68 776 78 790 73 804 84 818 97 832 83 845 64 859 72 872 76 888 71"/><path stroke="#6b93c0" stroke-width="3" fill="none" d="M695 170L709 119 722 178 736 121 749 166 763 155 776 179 790 123 804 163 818 169 831 169 845 122 859 126 872 165 887 117"/><path stroke="#aaa" stroke-width="13" stroke-dasharray="5 8.600" d="M694 203H888"/><g class="tiny"><text x="664" y="61">100K</text><text x="668" y="124">50K</text><text x="672" y="187">0K</text><text transform="translate(655 162) rotate(-90)">GDP per Capita (PPP)</text></g></svg><p>S-10 | Correla...</p></div>
  <div class="tab"><svg class="thumb" viewBox="32 32 255 180"><path stroke="#bbb" stroke-width="2" d="M72 52H285M72 184H285"/><path stroke="#eee" d="M72 73H285M72 122H285M72 172H285"/><g class="tiny"><text x="270" y="48">Coun</text><text x="58" y="76">40</text><text x="58" y="125">20</text><text x="63" y="175">0</text><text transform="translate(52 158) rotate(-90)">GDP Growth Rate (%)</text></g><g class="arr"><path fill="#7fd87f" d="M80 155l6 7h-4v7h-4v-7h-4z"/><path fill="#f58080" d="M97 159l6 7h-4v7h-4v-7h-4z"/><path fill="#f28e2b" d="M113 162l6 7h-4v7h-4v-7h-4z"/><path fill="#3f9f3f" d="M129 162l6 7h-4v7h-4v-7h-4z"/><path fill="#b07a6a" d="M145 157l6 7h-4v7h-4v-7h-4z"/><path fill="#f58090" d="M161 164l6 7h-4v7h-4v-7h-4z"/><path fill="#d06090" d="M177 159l6 7h-4v7h-4v-7h-4z"/><path fill="#4a78a8" d="M193 159l6 7h-4v7h-4v-7h-4z"/><path fill="#c85050" d="M209 155l6 7h-4v7h-4v-7h-4z"/><path fill="#a07098" d="M225 150l6 7h-4v7h-4v-7h-4z"/><path fill="#8cc8f0" d="M241 164l6 7h-4v7h-4v-7h-4z"/><path fill="#2e9f3f" d="M257 162l6 7h-4v7h-4v-7h-4z"/><path fill="#2078b0" d="M273 152l6 7h-4v7h-4v-7h-4z"/></g><path stroke="#bbb" stroke-width="20" stroke-dasharray="4 12" d="M78 200H285"/></svg><p>S-11 | Top 40 ...</p></div>
  <div class="tab"><svg class="thumb" viewBox="329 32 255 180"><path stroke="#eee" d="M374 59H582M374 103H582M374 154H582M374 205H582M374 40V210"/><g class="tiny"><text x="363" y="62">0</text><text x="357" y="106">-20</text><text x="357" y="157">-40</text><text x="357" y="208">-60</text><text transform="translate(350 178) rotate(-90)">GDP Growth Rate (%)</text></g><g class="arr"><path fill="#3f9f3f" d="M380 84l6-7h-4v-7h-4v7h-4z"/><path fill="#3f9f3f" d="M394 101l6-7h-4v-7h-4v7h-4z"/><path fill="#666" d="M407 104l6-7h-4v-7h-4v7h-4z"/><path fill="#f8a8c8" d="M420 96l6-7h-4v-7h-4v7h-4z"/><path fill="#4a78a8" d="M434 81l6-7h-4v-7h-4v7h-4z"/><path fill="#f0c050" d="M447 96l6-7h-4v-7h-4v7h-4z"/><path fill="#bbb" d="M460 82l6-7h-4v-7h-4v7h-4z"/><path fill="#f28e2b" d="M474 87l6-7h-4v-7h-4v7h-4z"/><path fill="#e8b830" d="M487 87l6-7h-4v-7h-4v7h-4z"/><path fill="#f58080" d="M501 82l6-7h-4v-7h-4v7h-4z"/><path fill="#20b0c8" d="M514 108l6-7h-4v-7h-4v7h-4z"/><path fill="#d8a898" d="M527 81l6-7h-4v-7h-4v7h-4z"/><path fill="#7fd87f" d="M541 81l6-7h-4v-7h-4v7h-4z"/><path fill="#f58090" d="M554 81l6-7h-4v-7h-4v7h-4z"/><path fill="#f28020" d="M567 81l6-7h-4v-7h-4v7h-4z"/><path fill="#f0b060" d="M581 87l6-7h-4v-7h-4v7h-4z"/></g></svg><p>S-12 | Bottom...</p></div>
  <div class="tab last"><svg class="thumb" viewBox="626 32 255 180"><path fill="#f2f0e8" d="M626 36H880V50H626Z"/><g class="tiny dk"><text x="666" y="46" font-weight="bold">2022 Economical Freedom score</text></g><use href="#world" transform="translate(493 1) scale(.305 .275)"/><path fill="#e6e6e6" d="M640 162L660 152 700 155 740 148V162Z"/><path stroke="#ddd" d="M626 163H760M680 180V212"/><g class="tiny"><text x="630" y="196">10</text><text x="630" y="209">0</text></g></svg><p><svg width="12" height="11" viewBox="0 0 12 11"><path d="M.5.500h11v10H.5zM6 .5v10M.5 5.500h11" fill="none" stroke="#666"/></svg>D-1</p></div>
  <div class="newbtns">
    <div><svg width="16" height="16" viewBox="0 0 16 16"><path d="M8 11.500H.5V.500H11.500V7M3.500 9V6M5.500 9V3M8 9V5"/><path class="k" d="M7 11.500h8M11 7.500v8"/></svg></div>
    <div><svg width="16" height="16" viewBox="0 0 16 16"><path d="M7 11.500H.5V.500H11.500V7M6 .5v11M.5 6h11"/><path class="k" d="M7 11.500h8M11 7.500v8"/></svg></div>
    <div><svg width="16" height="16" viewBox="0 0 16 16"><path d="M7 12L.5 9.500V.800L6 2.800 11.500.800V7M6 2.800V11"/><path class="k" d="M7 11.500h8M11 7.500v8"/></svg></div>
  </div>
</footer>

<div class="status">
  <span class="s1">182 marks</span><span class="s2">1 row by 1 column</span><span class="s3">SUM(2022 Score): 10,523.70</span>
  <i class="c1"></i><i class="c2"></i><i class="c3"></i><i class="c3"></i>
  <svg class="nav" width="71" height="20" viewBox="0 0 71 20"><path d="M9.500 6h1.500v7H9.500zM15 6v7l-4-3.500zM30 6v7l-4-3.500zM42 6v7l4-3.500zM57 6v7l4-3.500zM61.500 6h1.500v7h-1.500z" fill="#555"/></svg>
  <svg class="views" width="67" height="20" viewBox="0 0 67 20"><path fill="#bdbdbd" d="M8 4h3v3H8zM12 4h3v3h-3zM16 4h3v3h-3zM8 8h3v3H8zM12 8h3v3h-3zM16 8h3v3h-3zM8 12h3v3H8zM12 12h3v3h-3zM16 12h3v3h-3zM50 4h11v11H50z"/><path fill="#555" d="M29 4h11v7H29zM29 12h3v3h-3zM33 12h3v3h-3zM37 12h3v3h-3z"/></svg>
</div>

<div class="taskbar">
  <svg width="239" height="22" viewBox="0 363 717 66">
    <path fill="#fff" d="M27 404L47 401V420H27ZM50 400L75 397V420H50ZM27 423H47V440H27ZM50 423H75V440H50Z"/>
    <circle cx="203" cy="415" r="14" fill="none" stroke="#fff" stroke-width="3.500"/><path d="M193 424l-9 12" stroke="#fff" stroke-width="3.500"/>
    <path fill="#e8a41c" d="M316 396H340L345 403H316Z"/><path fill="#fcd565" d="M316 403H380V440H316Z"/><path fill="#4a9fe0" d="M327 426H369V440H327Z"/>
    <defs><linearGradient id="pg" x2="1" y2="1"><stop stop-color="#9a70e8"/><stop offset="1" stop-color="#3a80f0"/></linearGradient></defs>
    <rect x="459" y="387" width="72" height="60" rx="14" fill="url(#pg)"/><path d="M484 440V425M480 406H500a10 10 0 0 1 0 20H492" fill="none" stroke="#fff" stroke-width="8"/>
    <path fill="#e33b2e" d="M611 405A36 36 0 0 1 677 415H642Z"/><path fill="#fbc116" d="M642 404H676A36 36 0 0 1 672 440H655Z"/><path fill="#31a350" d="M611 404L630 430 645 445H620A36 36 0 0 1 611 404Z"/><circle cx="642" cy="423" r="19" fill="#fff"/><circle cx="642" cy="423" r="15" fill="#4285f4"/>
  </svg>
  <div class="running"><svg width="48" height="22" viewBox="717 363 144 66"><path fill="#f4f4f4" stroke="#bbb" d="M756 388H821V440H756Z"/><path stroke="#3c7ea8" stroke-width="3.500" d="M779 418h18M788 408v24M764 407h14M771 400v14M797 407h14M804 400v14M783 395h10M788 390v10M761 424h10M766 419v10M806 424h10M811 419v10"/></svg></div>
  <i class="grow"></i>
  <svg width="219" height="22" viewBox="180 363 657 66" fill="none" stroke="#fff" stroke-width="3"><path d="M201 428L216 414 231 428"/><path d="M276 434a34 34 0 0 1 33-24M284 436a26 26 0 0 1 25-18M293 436a17 17 0 0 1 16-10"/><path d="M362 415H382V432H350M338 410h16v6q-8 8-16 0ZM342 410v-6M350 410v-6M346 420v12"/><path fill="#fff" stroke="none" d="M364 419h14v12h-14z"/><path d="M410 417h6l10-9v25M434 412q7 8 0 18M441 407q10 12 0 26M449 403q12 16 0 30"/><path d="M822 363V429" stroke="#666"/><path fill="#fff" stroke="none" d="M714 399H762V438H714Z"/><path stroke="#1b1b1b" d="M722 409h32M722 418h32M722 427h20"/><circle cx="765" cy="432" r="13" fill="#555" stroke="#999"/></svg>
  <span class="clock">22:39</span>
</div>
</body>
</html>
```
FILE: styles.css
```css
* { box-sizing: border-box; }
body { margin: 0; width: 1359px; height: 738px; overflow: hidden; background: #f4f4f4; font: 300 13px/16px Roboto, "Open Sans", sans-serif; color: #1c1c1c; display: flex; flex-direction: column; }
svg { display: block; flex: none; }
.defs { position: absolute; }
h1, h3, h4, p { margin: 0; font-weight: inherit; font-size: 13px; }

.titlebar { height: 12px; flex: none; background: #fff; display: flex; overflow: hidden; font: 12px/16px "Open Sans", sans-serif; color: #000; }
.app-icon { width: 12px; height: 12px; }
.title-text { margin: -8px auto 0 5px; font-size: 11.7px; letter-spacing: -.25px; white-space: nowrap; }
.menubar { height: 19px; flex: none; background: #fff; display: flex; gap: 16px; padding-left: 1px; font: 11.6px/19px "Open Sans", sans-serif; letter-spacing: -.18px; color: #000; }

.toolbar { height: 41px; flex: none; display: flex; align-items: flex-start; }
.toolbar > svg { fill: none; stroke: #666; stroke-width: 3; }
.toolbar > svg.dim { stroke: #b4b4b4; }
.toolbar .f { fill: #666; stroke: none; }
.toolbar .dim .f { fill: #b4b4b4; }
.toolbar .k { stroke: #333; }
.toolbar > .showicon { stroke: none; margin: 13px 6px 0 8px; }
.sep { flex: none; width: 1px; height: 35px; margin-top: 4px; background: #cfcfcf; }
.spaced { margin-left: 5px; margin-right: 1px; }
.wide { margin-left: 1px; margin-right: 1px; }
.fit { width: 104px; height: 23px; margin: 9px 0 0 9px; border: 1px solid #d0d0d0; border-radius: 2px; display: flex; justify-content: flex-end; padding: 9px 5px 0; }
.fit path { fill: #ccc; }
.fitsep { margin-left: 15px; }
.grow { flex: 1; }
.showme { font-size: 14px; line-height: 16px; margin: 12px 28px 0 0; width: 55px; white-space: nowrap; }

.work { height: 526px; flex: none; display: flex; }
.datapane { width: 203px; height: 526px; background: #fff; border-right: 1px solid #d0d0d0; display: flex; flex-direction: column; overflow: hidden; }
.ptabs { height: 27px; flex: none; display: flex; font-size: 14px; line-height: 25px; }
.ptabs b { width: 70px; padding-left: 11px; font-weight: 700; color: #111; font-size: 13.5px; border-top: 1px solid #d0d0d0; }
.ptabs span { flex: 1; padding-left: 12px; background: #fafafa; border: solid #d0d0d0; border-width: 1px 0 1px 1px; }
.ptabs svg { width: 14px; height: 27px; padding: 7px 7px 9px 0; background: #fafafa; border: solid #d0d0d0; border-width: 1px 0; }
.source { height: 30px; flex: none; border-bottom: 1px solid #e0e0e0; display: flex; align-items: center; gap: 4px; padding: 0 0 1px 16px; color: #333; white-space: nowrap; letter-spacing: -.2px; }
.search { height: 34px; flex: none; display: flex; padding: 8px 0 0 1px; }
.search svg { fill: none; stroke: #666; }
.sbox { width: 130px; height: 23px; border: 1px solid #c0c0c0; border-radius: 2px; display: flex; justify-content: space-between; align-items: center; padding: 0 6px; color: #777; }
.funnel { margin: 5px 6px 0 4px; }
.search > i { width: 1px; height: 18px; margin-top: 2px; background: #ccc; }
.listic { margin: 5px 8px 0 6px; }
.car { margin-top: 9px; }
.datapane h3 { height: 27px; flex: none; padding: 5px 0 0 11px; font-weight: 700; color: #111; font-size: 13.5px; }
.listwrap { flex: 1; min-height: 0; display: flex; }
.fields { width: 186px; height: 408px; overflow: hidden; }
.row { height: 21px; line-height: 20px; display: flex; white-space: nowrap; }
.row svg { width: 40px; height: 21px; fill: none; stroke: #3ba37e; }
.row.dimn svg { stroke: #4383a4; }
.abc { width: 40px; padding-left: 14px; font: 600 10px/21px "Open Sans", sans-serif; color: #4383a4; flex: none; }
.ital { font-style: italic; }
.fields hr { margin: 0 7px 1px 8px; border: 0; border-top: 1px solid #d8d8d8; }
.scroll { width: 15px; background: #f0f0f0; display: flex; flex-direction: column; height: 407px; justify-content: flex-start; }
.scroll svg { fill: none; stroke: #444; stroke-width: 2; }
.scroll i { height: 169px; background: #a6a6a6; margin-bottom: auto; }

.cards { width: 157px; margin: 0 6px; display: flex; flex-direction: column; gap: 6px; }
.card { border: 1px solid #d4d4d4; background: #fafafa; padding: 7px 0 0 6px; }
.card h4, .legend h4 { color: #333; }
.pages { height: 62px; } .filters { height: 101px; } .marks { height: 241px; }
.pill { display: block; height: 20px; width: 148px; border-radius: 10px; background: #00b180; color: #fff; line-height: 19px; padding-left: 10px; font-weight: 400; letter-spacing: .1px; white-space: nowrap; overflow: hidden; }
.filters .pill { width: 147px; margin: 0 0 3px -2px; }
.filters h4 { margin-bottom: 9px; }
.pill.blue { background: #4996b2; }
.select { width: 143px; height: 21px; margin-top: 12px; border: 1px solid #c8c8c8; border-radius: 2px; display: flex; align-items: center; color: #444; padding-left: 10px; }
.select span { margin-left: 7px; font-size: 12.5px; flex: 1; }
.select i { width: 18px; height: 19px; border-left: 1px solid #ccc; padding: 8px 0 0 5px; }
.mgrid { display: grid; grid-template-columns: 44px 43px 44px; gap: 6px; margin-top: 6px; }
.mgrid div { height: 42px; border: 1px solid #d4d4d4; display: flex; flex-direction: column; align-items: center; padding-top: 5px; line-height: 18px; font-size: 12.5px; }
.enc { display: flex; gap: 5px; margin: 9px 0 0 5px; padding-left: 0; }
.enc + .enc { margin-top: 3px; }
.enc svg { margin-top: 1px; margin-right: -3px; }
.enc .pill { width: 114px; margin: 0; }

.canvas { width: 981px; display: flex; flex-direction: column; gap: 6px; }
.shelf { height: 28px; border: 1px solid #d4d4d4; background: #fafafa; display: flex; }
.slabel { width: 125px; border-right: 1px solid #d4d4d4; display: flex; align-items: center; gap: 7px; padding-left: 6px; color: #333; }
.shelf .pill { margin: 3px 0 0 2px; }
.lower { display: flex; gap: 6px; align-items: flex-start; }
.view { width: 821px; height: 452px; border: 1px solid #d4d4d4; background: #fff; padding: 6px 5px; }
.view h1 { margin: 0 1px 1px; height: 35px; background: #f7f6ef; font: 600 19.5px/37px "Open Sans", sans-serif; text-align: center; color: #2a2a2a; white-space: nowrap; }
.mapbox { position: relative; width: 809px; height: 403px; border: 1px solid #e4e4e4; }
.credit { position: absolute; left: 4px; bottom: 2px; font: 600 10.500px/14px "Open Sans", sans-serif; letter-spacing: -.14px; color: #666; white-space: nowrap; }
.legend { width: 154px; height: 71px; border: 1px solid #d4d4d4; background: #fff; }
.legend h4 { background: #fafafa; height: 29px; padding: 7px 0 0 6px; }
.ramp { margin: 4px 4px 0; height: 16px; border: 1px solid #a8a094; background: linear-gradient(90deg, #ae123a, #d8344a 15%, #f66c5c 30%, #fba08c 42%, #dcd8d6 50.500%, #a6cce4 56%, #6fa3cc 75%, #35608f); }
.ramp i { display: block; width: 1px; height: 4px; margin: 12px 0 0 71px; background: #000; }
.ends { display: flex; justify-content: space-between; padding: 2px 5px 0 4px; color: #333; }

.sheets { height: 97px; flex: none; background: #e6e6e6; border-top: 1px solid #c8c8c8; border-bottom: 1px solid #c8c8c8; display: flex; overflow: hidden; }
.tab { width: 99px; flex: none; border-right: 1px solid #c8c8c8; padding: 6px 0 0 6px; color: #444; overflow: hidden; }
.tab.first { width: 93px; padding-left: 0; }
.tab.active { background: #fafafa; width: 100px; }
.tab.last { width: 45px; border-right: 0; }
.thumb { width: 86px; height: 62px; border: 1px solid #aaa; background: #fff; display: block; overflow: hidden; }
.active .thumb { border-color: #ddd; }
.ds { background: #fafafa; line-height: 60px; text-align: center; letter-spacing: .4px; }
.tab p { margin-top: 7px; line-height: 16px; white-space: nowrap; display: flex; align-items: center; gap: 5px; letter-spacing: .1px; }
.first p { padding-left: 2px; }
.active p { font-weight: 700; color: #555; margin-top: 6px; letter-spacing: -.1px; }
.tiny { font: 8px "Open Sans", sans-serif; fill: #777; letter-spacing: 0; }
.tiny.dk { fill: #333; } .tiny.lt { fill: #fff; } .tiny.end { text-anchor: end; }
.newbtns { width: 33px; flex: none; border-left: 1px solid #c8c8c8; background: #e8e8e8; }
.newbtns div { height: 32px; padding: 9px 0 0 9px; border-bottom: 1px solid #c8c8c8; }
.newbtns svg { fill: none; stroke: #555; }
.newbtns .k { stroke-width: 2.500; }

.status { height: 21px; flex: none; background: #ebebeb; display: flex; font-size: 12px; line-height: 22px; color: #111; white-space: nowrap; overflow: hidden; }
.s1 { width: 71px; margin-left: -6px; } .s2 { width: 106px; } .s3 { flex: 1; }
.status i { border-left: 1px solid #c8c8c8; }
.c1 { width: 127px; } .c2, .c3 { width: 27px; }
.status .c3 + .c3 { width: 47px; }
.nav, .views { border-left: 1px solid #c8c8c8; }
.nav { width: 71px; }
.views { width: 68px; }

.taskbar { height: 22px; flex: none; background: #1b1b1b; display: flex; position: relative; overflow: hidden; }
.running { width: 48px; background: #474747; }
.clock { position: absolute; left: 1257px; top: 3px; font: 12px/16px "Open Sans", sans-serif; letter-spacing: -.6px; color: #fff; }
```
